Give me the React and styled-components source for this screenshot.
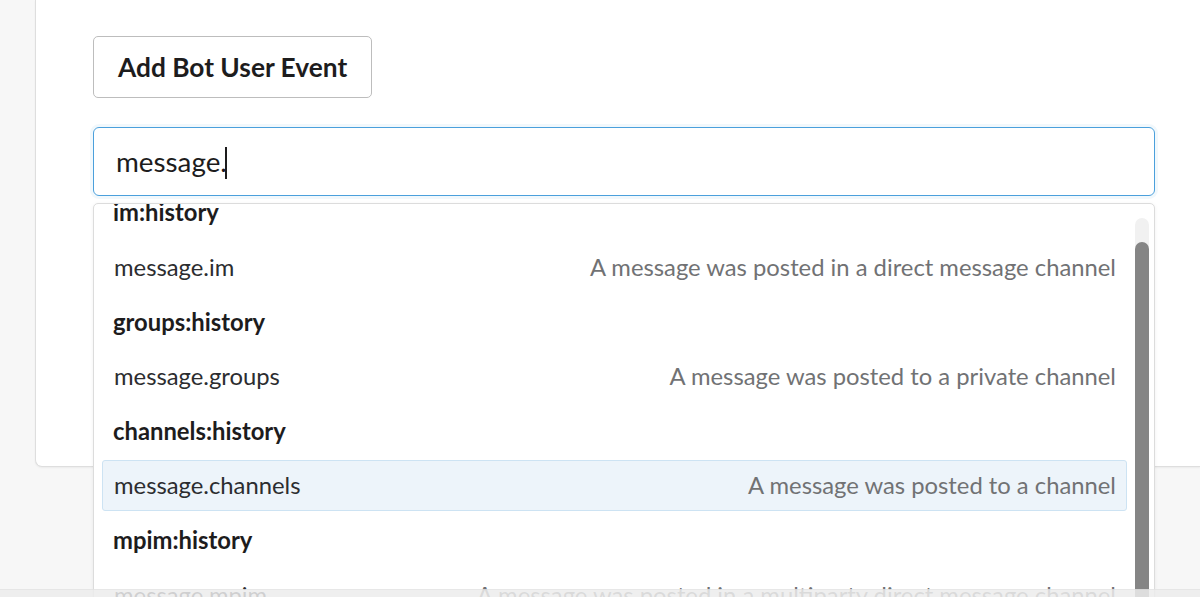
import React, { useLayoutEffect, useRef } from 'react';
import styled, { createGlobalStyle } from 'styled-components';

const GlobalStyle = createGlobalStyle`
  html, body {
    margin: 0;
    height: 100%;
    overflow: hidden;
    background: #f7f7f7;
    font-family: Lato, "Open Sans", sans-serif;
    -webkit-font-smoothing: antialiased;
  }
`;

const Page = styled.div`
  height: 597px;
  padding-left: 35px;
`;

const Card = styled.div`
  position: relative;
  height: 467px;
  box-sizing: border-box;
  background: #fff;
  border: 1px solid #dedede;
  border-top: none;
  border-right: none;
  border-bottom-left-radius: 7px;
  box-shadow: 0 1px 2px rgba(0, 0, 0, 0.05);
  padding: 36px 0 0 57px;
`;

const Button = styled.button`
  display: block;
  height: 62px;
  padding: 0 24px;
  background: #fff;
  border: 1px solid #bdbdbd;
  border-radius: 5px;
  font-family: Lato, sans-serif;
  font-weight: 700;
  font-size: 26.3px;
  color: #1d1c1d;
  cursor: pointer;
`;

const Field = styled.div`
  position: relative;
  margin-top: 29px;
  width: 1062px;
`;

const Input = styled.div`
  box-sizing: border-box;
  height: 69px;
  border: 1px solid #4ba0dc;
  border-radius: 6px;
  box-shadow: 0 0 0 3px rgba(75, 160, 220, 0.08);
  padding-left: 22px;
  display: flex;
  align-items: center;
  font-size: 27.8px;
  color: #1d1c1d;
`;

const Caret = styled.span`
  display: inline-block;
  width: 2px;
  height: 32px;
  background: #1d1c1d;
  margin-left: -2px;
  transform: translateY(1px);
`;

const Menu = styled.div`
  position: absolute;
  top: 76px;
  left: 0;
  right: 0;
  height: 430px;
  background: #fff;
  border: 1px solid #dcdcdc;
  border-radius: 5px;
  box-shadow: 0 1px 4px rgba(0, 0, 0, 0.06);
  z-index: 2;
`;

const Scroller = styled.div`
  height: 100%;
  overflow-y: scroll;
  scrollbar-width: none;
  &::-webkit-scrollbar { display: none; }
`;

const List = styled.div`
  padding: 0 27px 0 8px;
`;

const Heading = styled.div`
  height: 54.6px;
  display: flex;
  align-items: center;
  padding-left: 11px;
  font-weight: 700;
  font-size: 23.8px;
  color: #1d1c1d;
`;

const Item = styled.div`
  height: 50.6px;
  margin: 2px 0;
  box-sizing: border-box;
  display: flex;
  align-items: center;
  justify-content: space-between;
  padding: 0 10px 0 11px;
  border: 1px solid ${p => (p.$active ? '#cde3f3' : 'transparent')};
  border-radius: 3px;
  background: ${p => (p.$active ? '#edf4fa' : 'transparent')};
  font-size: 23.8px;
`;

const Name = styled.span`
  color: #2c2d30;
`;

const Desc = styled.span`
  color: #717274;
`;

const Track = styled.div`
  position: absolute;
  top: 14px;
  right: 5px;
  width: 14px;
  bottom: -10px;
  border-radius: 7px;
  background: #f1f1f1;
`;

const Thumb = styled.div`
  position: absolute;
  top: 24px;
  left: 0;
  right: 0;
  bottom: 0;
  border-radius: 7px;
  background: #858585;
`;

const BottomEdge = styled.div`
  position: fixed;
  left: 0;
  right: 0;
  bottom: 0;
  height: 7px;
  background: rgba(236, 236, 236, 0.85);
  border-top: 1px solid rgba(0, 0, 0, 0.03);
  z-index: 5;
`;

const events = [
  { scope: 'channels:history', name: 'message.channels', desc: 'A message was posted to a channel' },
  { scope: 'im:history', name: 'message.im', desc: 'A message was posted in a direct message channel' },
  { scope: 'groups:history', name: 'message.groups', desc: 'A message was posted to a private channel' },
  { scope: 'channels:history', name: 'message.channels', desc: 'A message was posted to a channel', active: true },
  { scope: 'mpim:history', name: 'message.mpim', desc: 'A message was posted in a multiparty direct message channel' },
  { scope: 'im:history', name: 'message.im', desc: 'A message was posted in a direct message channel' },
];

const App = () => {
  const scroller = useRef(null);

  useLayoutEffect(() => {
    if (scroller.current) scroller.current.scrollTop = 128;
  }, []);

  return (
    <>
      <GlobalStyle />
      <Page>
        <Card>
          <Button>Add Bot User Event</Button>
          <Field>
            <Input>
              message.<Caret />
            </Input>
            <Menu>
              <Scroller ref={scroller}>
                <List>
                  {events.map((e, i) => (
                    <React.Fragment key={i}>
                      <Heading>{e.scope}</Heading>
                      <Item $active={e.active}>
                        <Name>{e.name}</Name>
                        <Desc>{e.desc}</Desc>
                      </Item>
                    </React.Fragment>
                  ))}
                </List>
              </Scroller>
              <Track>
                <Thumb />
              </Track>
            </Menu>
          </Field>
        </Card>
      </Page>
      <BottomEdge />
    </>
  );
};

export default App;
